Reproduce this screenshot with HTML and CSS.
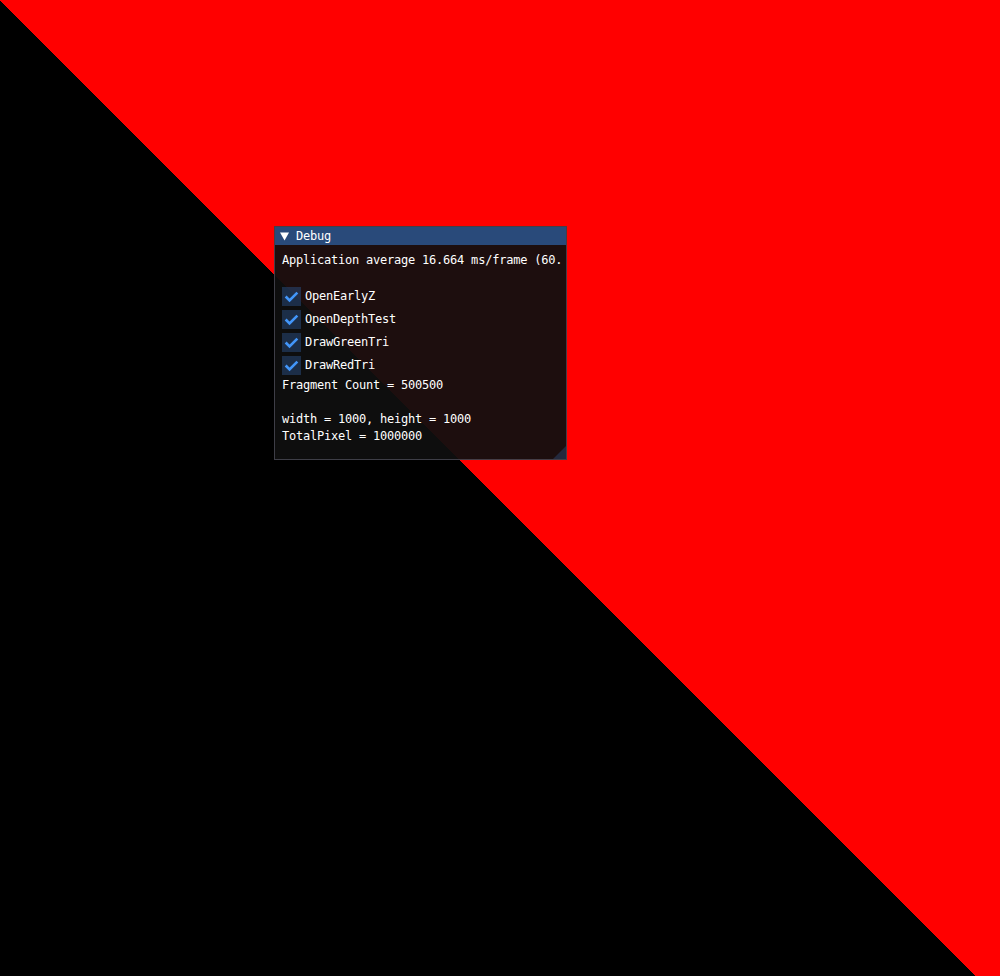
FILE: index.html
```html
<!DOCTYPE html>
<html>
<head>
<meta charset="utf-8">
<link rel="stylesheet" href="styles.css">
</head>
<body>
<div class="scene">
  <div class="win">
    <div class="titlebar">
      <svg class="arrow" width="13" height="13" viewBox="0 0 13 13"><polygon points="2,2.6 11,2.6 6.5,10.4" fill="#fff"/></svg>
      <span class="title">Debug</span>
    </div>
    <div class="content">
      <div class="line first">Application average 16.664 ms/frame (60.</div>
      <div class="line"></div>
      <div class="check">
        <span class="box"><svg width="19" height="19" viewBox="0 0 19 19"><polyline points="3.65,9.5 7.55,13.4 15.35,5.6" fill="none" stroke="#4296fa" stroke-width="2.6" stroke-linejoin="miter"/></svg></span>
        <span class="label">OpenEarlyZ</span>
      </div>
      <div class="check">
        <span class="box"><svg width="19" height="19" viewBox="0 0 19 19"><polyline points="3.65,9.5 7.55,13.4 15.35,5.6" fill="none" stroke="#4296fa" stroke-width="2.6" stroke-linejoin="miter"/></svg></span>
        <span class="label">OpenDepthTest</span>
      </div>
      <div class="check">
        <span class="box"><svg width="19" height="19" viewBox="0 0 19 19"><polyline points="3.65,9.5 7.55,13.4 15.35,5.6" fill="none" stroke="#4296fa" stroke-width="2.6" stroke-linejoin="miter"/></svg></span>
        <span class="label">DrawGreenTri</span>
      </div>
      <div class="check">
        <span class="box"><svg width="19" height="19" viewBox="0 0 19 19"><polyline points="3.65,9.5 7.55,13.4 15.35,5.6" fill="none" stroke="#4296fa" stroke-width="2.6" stroke-linejoin="miter"/></svg></span>
        <span class="label">DrawRedTri</span>
      </div>
      <div class="line">Fragment Count = 500500</div>
      <div class="line"></div>
      <div class="line">width = 1000, height = 1000</div>
      <div class="line">TotalPixel = 1000000</div>
    </div>
    <div class="grip"></div>
  </div>
</div>
</body>
</html>
```
FILE: styles.css
```css
html, body {
  margin: 0;
  padding: 0;
  background: #000;
}
.scene {
  position: relative;
  width: 1000px;
  height: 976px;
  overflow: hidden;
  background-image: linear-gradient(to bottom left, #ff0000 50%, #000000 50%);
  background-size: 1000px 1000px;
  background-repeat: no-repeat;
  font-family: "DejaVu Sans Mono", "Liberation Mono", monospace;
  font-size: 12px;
  letter-spacing: -0.22px;
  color: #fff;
}
.win {
  position: absolute;
  left: 274px;
  top: 226px;
  width: 293px;
  height: 234px;
  box-sizing: border-box;
  border: 1px solid rgba(110, 110, 128, 0.5);
  background: rgba(15, 15, 15, 0.94);
}
.titlebar {
  height: 18px;
  background: #294a7a;
  display: flex;
  align-items: center;
  padding-left: 3px;
}
.arrow {
  display: block;
}
.title {
  margin-left: 5px;
  line-height: 13px;
}
.content {
  display: flex;
  flex-direction: column;
  gap: 4px;
  padding: 8px 0 0 7px;
}
.line {
  height: 13px;
  line-height: 13px;
  white-space: nowrap;
}
.first {
  padding-top: 1px;
  margin-bottom: -1px;
}
.check {
  display: flex;
  align-items: center;
  gap: 4px;
  height: 19px;
}
.box {
  width: 19px;
  height: 19px;
  background: rgba(41, 74, 122, 0.54);
  display: block;
}
.box svg {
  display: block;
}
.label {
  line-height: 13px;
}
.grip {
  position: absolute;
  right: 0;
  bottom: 0;
  width: 13px;
  height: 13px;
  background: rgba(66, 150, 250, 0.2);
  clip-path: polygon(100% 0, 100% 100%, 0 100%);
}
```
